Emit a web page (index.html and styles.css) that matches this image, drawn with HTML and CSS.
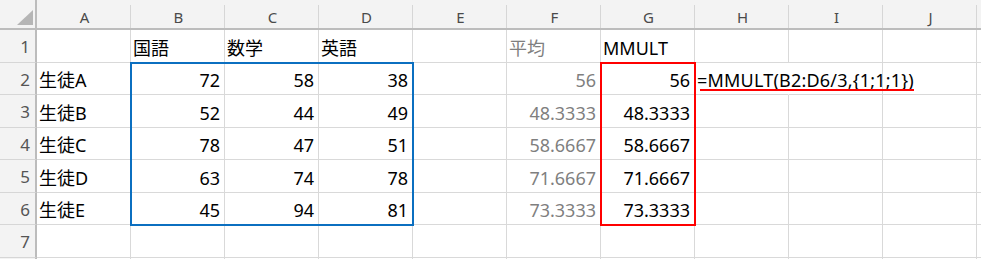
FILE: index.html
```html
<!DOCTYPE html>
<html lang="ja">
<head>
<meta charset="utf-8">
<title>MMULT</title>
<link rel="stylesheet" href="styles.css">
</head>
<body>
<div class="wrap">
<div class="sheet">
  <div class="corner"><svg width="16" height="15" viewBox="0 0 16 15"><polygon points="16,0 16,15 0,15" fill="#b5b5b5"/></svg></div>
  <div class="ch">A</div><div class="ch">B</div><div class="ch">C</div><div class="ch">D</div><div class="ch">E</div><div class="ch">F</div><div class="ch">G</div><div class="ch">H</div><div class="ch">I</div><div class="ch">J</div><div class="ch last"></div>

  <div class="rh">1</div>
  <div class="c"></div><div class="c">国語</div><div class="c">数学</div><div class="c">英語</div><div class="c"></div><div class="c gray">平均</div><div class="c">MMULT</div><div class="c"></div><div class="c"></div><div class="c"></div><div class="c"></div>

  <div class="rh">2</div>
  <div class="c">生徒A</div><div class="c n">72</div><div class="c n">58</div><div class="c n">38</div><div class="c"></div><div class="c n gray">56</div><div class="c n">56</div><div class="c spill"><span class="formula">=MMULT(B2:D6/3,{1;1;1})</span></div><div class="c"></div><div class="c"></div><div class="c"></div>

  <div class="rh">3</div>
  <div class="c">生徒B</div><div class="c n">52</div><div class="c n">44</div><div class="c n">49</div><div class="c"></div><div class="c n gray">48.3333</div><div class="c n">48.3333</div><div class="c"></div><div class="c"></div><div class="c"></div><div class="c"></div>

  <div class="rh">4</div>
  <div class="c">生徒C</div><div class="c n">78</div><div class="c n">47</div><div class="c n">51</div><div class="c"></div><div class="c n gray">58.6667</div><div class="c n">58.6667</div><div class="c"></div><div class="c"></div><div class="c"></div><div class="c"></div>

  <div class="rh">5</div>
  <div class="c">生徒D</div><div class="c n">63</div><div class="c n">74</div><div class="c n">78</div><div class="c"></div><div class="c n gray">71.6667</div><div class="c n">71.6667</div><div class="c"></div><div class="c"></div><div class="c"></div><div class="c"></div>

  <div class="rh">6</div>
  <div class="c">生徒E</div><div class="c n">45</div><div class="c n">94</div><div class="c n">81</div><div class="c"></div><div class="c n gray">73.3333</div><div class="c n">73.3333</div><div class="c"></div><div class="c"></div><div class="c"></div><div class="c"></div>

  <div class="rh">7</div>
  <div class="c"></div><div class="c"></div><div class="c"></div><div class="c"></div><div class="c"></div><div class="c"></div><div class="c"></div><div class="c"></div><div class="c"></div><div class="c"></div><div class="c"></div>

  <div class="rh"></div>
  <div class="c"></div><div class="c"></div><div class="c"></div><div class="c"></div><div class="c"></div><div class="c"></div><div class="c"></div><div class="c"></div><div class="c"></div><div class="c"></div><div class="c"></div>
</div>
<div class="overlay">
  <div class="box blue"></div>
  <div class="box red"></div>
</div>
</div>
</body>
</html>
```

FILE: styles.css
```css
html, body {
  margin: 0;
  padding: 0;
  background: #ffffff;
  overflow: hidden;
}

.wrap {
  display: grid;
  width: 981px;
  height: 259px;
  overflow: hidden;
}

.sheet,
.overlay {
  grid-area: 1 / 1;
  display: grid;
  grid-template-columns: 37px repeat(10, 94px) 1fr;
  grid-template-rows: 30px 33px 32px 33px 32px 33px 32px 33px 1fr;
  height: 259px;
}

.sheet {
  font-family: "Noto Sans", "Noto Sans CJK JP", sans-serif;
  color: #000;
}

.overlay {
  pointer-events: none;
  z-index: 3;
}

.corner {
  box-sizing: border-box;
  background: #f3f3f3;
  border-right: 2px solid #bcbcbc;
  border-bottom: 2px solid #bcbcbc;
  display: flex;
  justify-content: flex-end;
  align-items: flex-end;
  padding: 0 2px 3px 0;
}

.corner svg {
  display: block;
}

.ch {
  box-sizing: border-box;
  background: linear-gradient(#d6d6d6, #d6d6d6) right bottom / 1px calc(100% - 5px) no-repeat, #f3f3f3;
  border-bottom: 2px solid #bcbcbc;
  display: flex;
  justify-content: center;
  align-items: flex-end;
  padding: 0 0 3px 1px;
  font-size: 15px;
  line-height: 15px;
  color: #4a4a4a;
}

.ch.last {
  background: #f3f3f3;
}

.rh {
  box-sizing: border-box;
  background: #f3f3f3;
  border-right: 2px solid #bcbcbc;
  border-bottom: 1px solid #d6d6d6;
  display: flex;
  justify-content: flex-end;
  align-items: center;
  padding: 1px 5px 0 0;
  font-size: 17px;
  line-height: 17px;
  color: #555555;
}

.c {
  box-sizing: border-box;
  border-right: 1px solid #d9d9d9;
  border-bottom: 1px solid #d9d9d9;
  display: flex;
  align-items: flex-end;
  justify-content: flex-start;
  padding: 0 4px 5px 2px;
  font-size: 18px;
  line-height: 18px;
  white-space: nowrap;
  min-width: 0;
}

.c.n {
  justify-content: flex-end;
}

.c.gray {
  color: #7f7f7f;
}

.c.spill {
  border-right-color: transparent;
  overflow: visible;
  position: relative;
  z-index: 2;
}

.formula {
  position: relative;
  letter-spacing: 0.2px;
}

.formula::after {
  content: "";
  position: absolute;
  left: 3px;
  right: 0;
  bottom: -2px;
  height: 2px;
  background: #ff0000;
}

.box {
  box-sizing: border-box;
  border: 2px solid;
  margin: -1px;
}

.box.blue {
  grid-column: 3 / 6;
  grid-row: 3 / 8;
  border-color: #0b6fc0;
}

.box.red {
  grid-column: 8 / 9;
  grid-row: 3 / 8;
  border-color: #ff0000;
}
```
